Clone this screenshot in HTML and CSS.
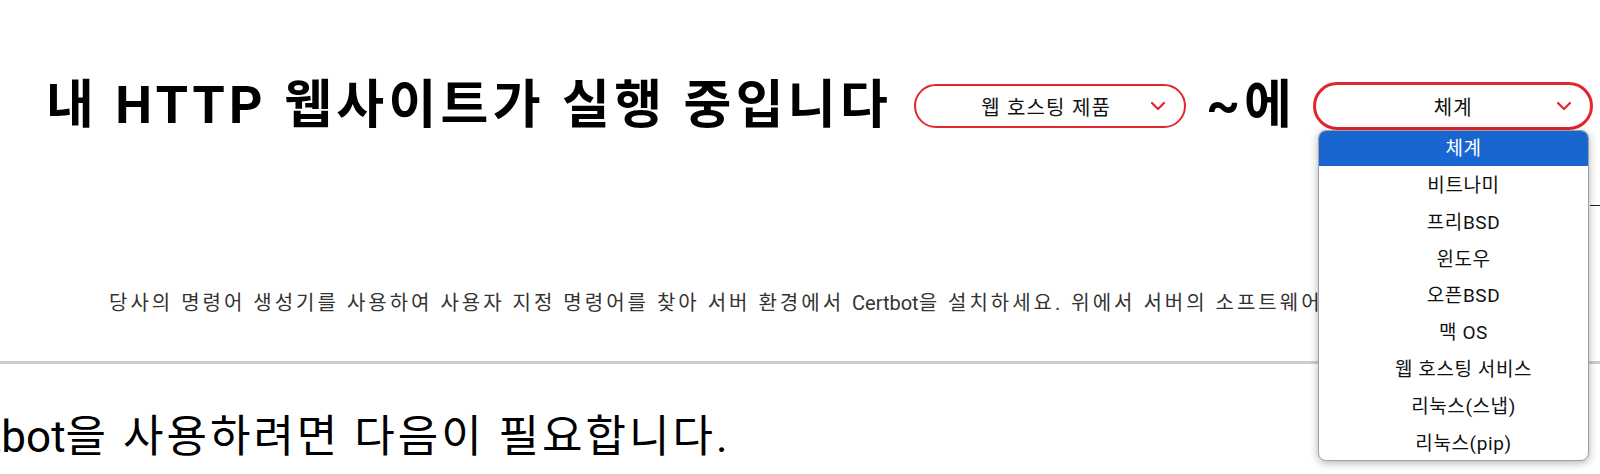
FILE: index.html
```html
<!DOCTYPE html>
<html lang="ko">
<head>
    <meta charset="UTF-8">
    <meta name="viewport" content="width=device-width, initial-scale=1.0">
    <title>Certbot 안내</title>
    <link rel="stylesheet" href="styles.css">
</head>
<body>
    <div class="page">
        <div class="hero">
            <h1 class="title">내 HTTP 웹사이트가 실행 중입니다</h1>
            <div class="picker">
                <span>웹 호스팅 제품</span>
                <svg class="chev" width="16" height="10" viewBox="0 0 16 10"><path d="M2 2 L8 8 L14 2" fill="none" stroke="#e3262e" stroke-width="2.2" stroke-linecap="round" stroke-linejoin="round"/></svg>
            </div>
            <span class="title on">~에</span>
            <div class="picker focused">
                <span>체계</span>
                <svg class="chev" width="16" height="10" viewBox="0 0 16 10"><path d="M2 2 L8 8 L14 2" fill="none" stroke="#e3262e" stroke-width="2.2" stroke-linecap="round" stroke-linejoin="round"/></svg>
            </div>
        </div>

        <p class="intro">당사의 명령어 생성기를 사용하여 사용자 지정 명령어를 찾아 서버 환경에서 <span class="latin">Certbot</span>을 설치하세요. 위에서 서버의 소프트웨어와 시스템을 선택하세요.</p>

        <hr class="divider">

        <h2 class="need"><span class="latin">Certbot</span>을 사용하려면 다음이 필요합니다.</h2>
    </div>

    <span class="edge-mark"></span>

    <!-- open list of the second picker -->
    <ul class="options">
        <li class="active">체계</li>
        <li>비트나미</li>
        <li>프리BSD</li>
        <li>윈도우</li>
        <li>오픈BSD</li>
        <li>맥 OS</li>
        <li>웹 호스팅 서비스</li>
        <li>리눅스(스냅)</li>
        <li>리눅스(pip)</li>
    </ul>
</body>
</html>
```

FILE: styles.css
```css
*{
    padding: 0;
    margin: 0;
    box-sizing: border-box;
}

html, body {
    width: 1600px;
    height: 474px;
    overflow: hidden;
}

body {
    font-family: Roboto, "Noto Sans CJK KR", sans-serif;
    background: #fff;
    color: #000;
    position: relative;
}

.latin {
    letter-spacing: 0;
}

.hero {
    display: flex;
    align-items: center;
    padding: 82px 0 0 46px;
    height: 130px;
}

.title {
    font-size: 52px;
    font-weight: bold;
    line-height: 48px;
    white-space: nowrap;
    letter-spacing: 4.3px;
}

.on {
    margin: 0 17px 0 20px;
}

.picker {
    width: 272px;
    height: 44px;
    border: 2px solid #e3262e;
    border-radius: 24px;
    display: flex;
    align-items: center;
    justify-content: center;
    position: relative;
    font-size: 20px;
    letter-spacing: 1.2px;
    color: #111;
    margin-left: 22px;
    padding-right: 8px;
    flex-shrink: 0;
}

.picker.focused {
    width: 280px;
    height: 48px;
    border-width: 3px;
    margin-left: 0;
    padding-right: 0;
}

.chev {
    position: absolute;
    right: 18px;
    top: 50%;
    margin-top: -5px;
}

.intro {
    font-size: 20px;
    letter-spacing: 3px;
    color: #333;
    white-space: nowrap;
    padding: 160px 0 0 109px;
    line-height: 26px;
}

.divider {
    border: none;
    height: 3px;
    background: #cdcdcd;
    margin-top: 45px;
}

.need {
    font-size: 44px;
    font-weight: normal;
    letter-spacing: 3px;
    white-space: nowrap;
    margin: 47px 0 0 -81px;
    line-height: 52px;
}

.edge-mark {
    position: absolute;
    left: 1590px;
    top: 205px;
    width: 10px;
    height: 1px;
    background: #222;
}

.options {
    position: absolute;
    left: 1318px;
    top: 130px;
    width: 271px;
    list-style: none;
    background: #fff;
    border: 1px solid #a0a0a0;
    border-radius: 8px;
    box-shadow: 0 2px 8px rgba(0, 0, 0, 0.3);
    overflow: hidden;
}

.options li {
    height: 36.8px;
    line-height: 39px;
    text-align: center;
    padding-left: 20px;
    font-size: 19px;
    letter-spacing: 0.6px;
    color: #111;
}

.options li.active {
    background: #1a66d0;
    color: #fff;
    height: 35px;
    line-height: 36px;
}
```
